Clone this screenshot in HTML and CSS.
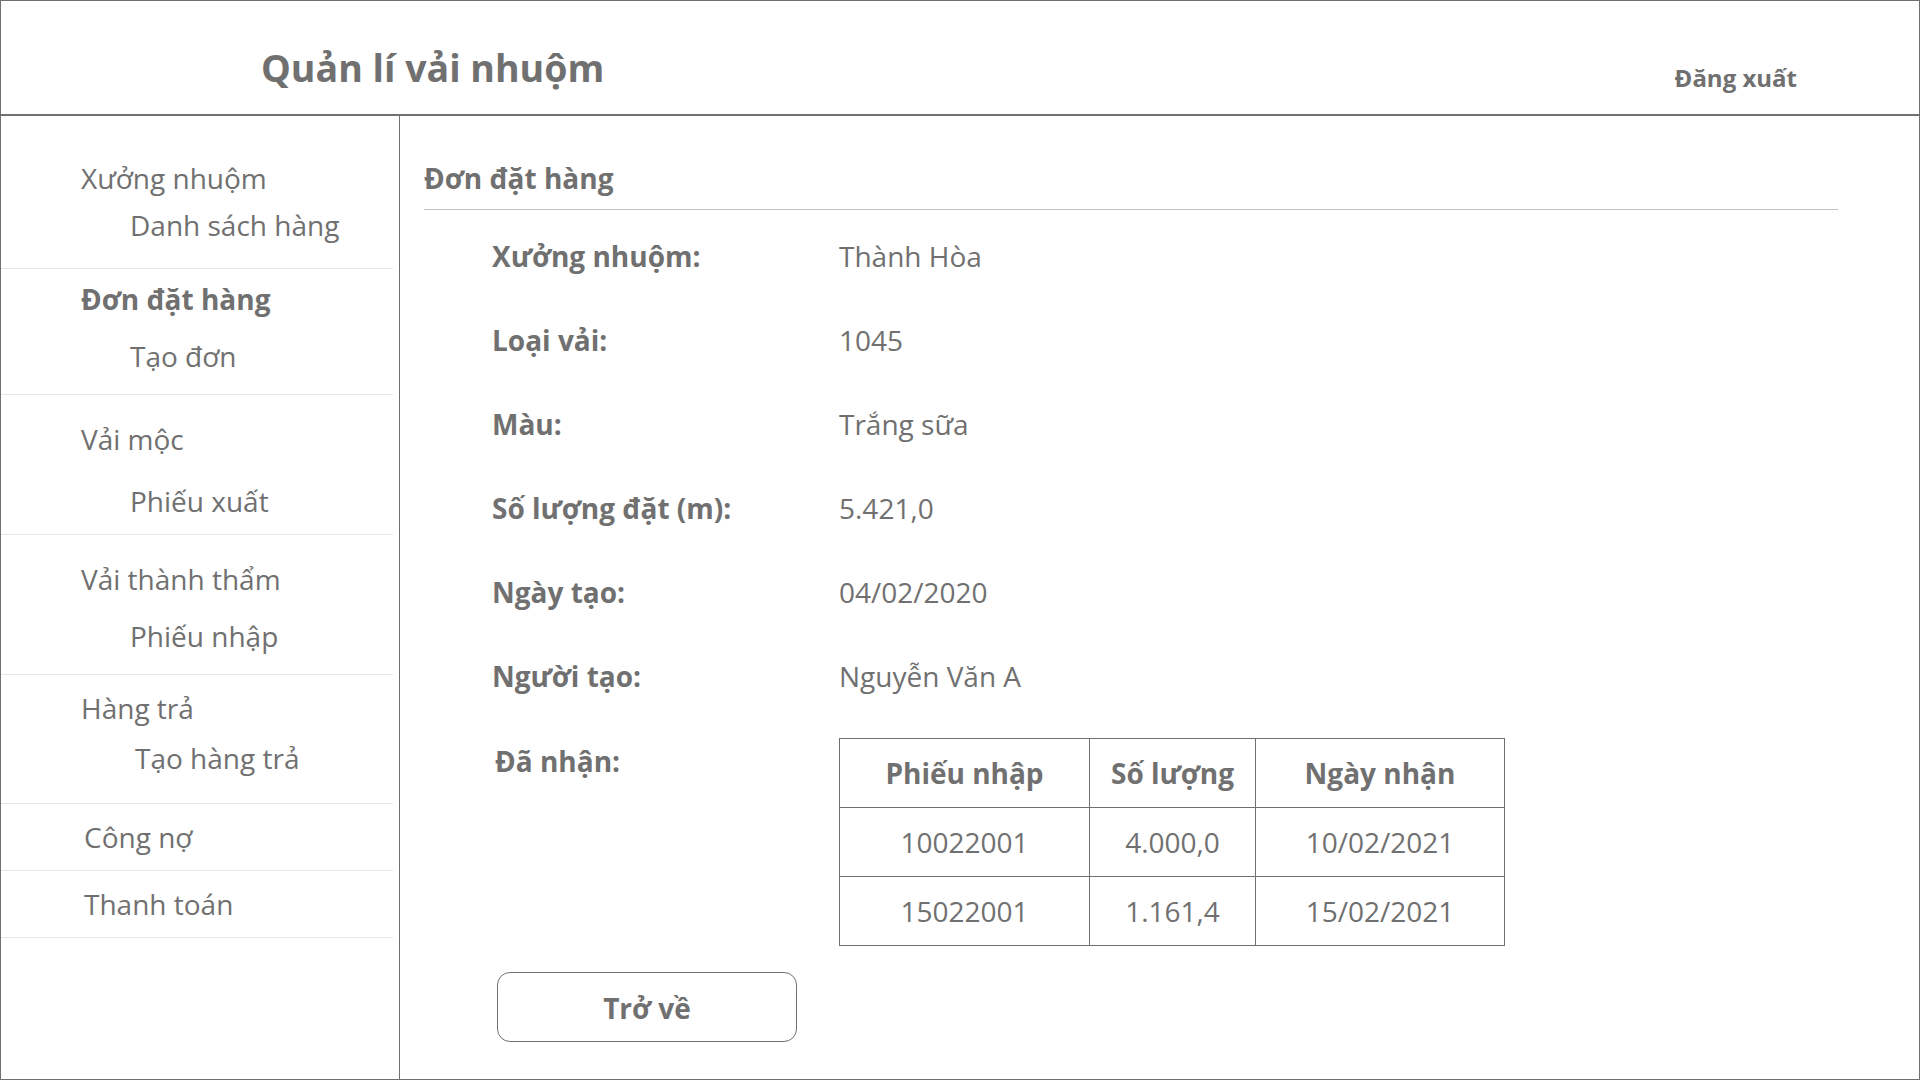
FILE: index.html
```html
<!DOCTYPE html>
<html lang="vi">
<head>
<meta charset="utf-8">
<title>Quản lí vải nhuộm</title>
<link rel="stylesheet" href="styles.css">
</head>
<body>
<div class="page">
  <header class="topbar">
    <h1 class="app-title">Quản lí vải nhuộm</h1>
    <a class="logout" href="#">Đăng xuất</a>
  </header>
  <div class="layout">
    <nav class="sidebar">
      <div class="nav-group g1">
        <div class="nav-main">Xưởng nhuộm</div>
        <div class="nav-sub">Danh sách hàng</div>
      </div>
      <div class="nav-group g2">
        <div class="nav-main active">Đơn đặt hàng</div>
        <div class="nav-sub">Tạo đơn</div>
      </div>
      <div class="nav-group g3">
        <div class="nav-main">Vải mộc</div>
        <div class="nav-sub">Phiếu xuất</div>
      </div>
      <div class="nav-group g4">
        <div class="nav-main">Vải thành thẩm</div>
        <div class="nav-sub">Phiếu nhập</div>
      </div>
      <div class="nav-group g5">
        <div class="nav-main">Hàng trả</div>
        <div class="nav-sub nav-sub-wide">Tạo hàng trả</div>
      </div>
      <div class="nav-group g6">
        <div class="nav-main nav-main-wide">Công nợ</div>
      </div>
      <div class="nav-group g6">
        <div class="nav-main nav-main-wide">Thanh toán</div>
      </div>
    </nav>
    <main class="content">
      <h2 class="section-title">Đơn đặt hàng</h2>
      <div class="details">
        <div class="label">Xưởng nhuộm:</div><div class="value">Thành Hòa</div>
        <div class="label">Loại vải:</div><div class="value">1045</div>
        <div class="label">Màu:</div><div class="value">Trắng sữa</div>
        <div class="label">Số lượng đặt (m):</div><div class="value">5.421,0</div>
        <div class="label">Ngày tạo:</div><div class="value">04/02/2020</div>
        <div class="label">Người tạo:</div><div class="value">Nguyễn Văn A</div>
      </div>
      <div class="received">
        <div class="label received-label">Đã nhận:</div>
        <table class="receipts">
          <thead>
            <tr><th class="c1">Phiếu nhập</th><th class="c2">Số lượng</th><th class="c3">Ngày nhận</th></tr>
          </thead>
          <tbody>
            <tr><td>10022001</td><td>4.000,0</td><td>10/02/2021</td></tr>
            <tr><td>15022001</td><td>1.161,4</td><td>15/02/2021</td></tr>
          </tbody>
        </table>
      </div>
      <button class="back-btn" type="button">Trở về</button>
    </main>
  </div>
</div>
</body>
</html>
```
FILE: styles.css
```css
* { box-sizing: border-box; }

html, body {
  margin: 0;
  padding: 0;
  background: #ffffff;
}

body {
  font-family: "Open Sans", "Noto Sans", sans-serif;
  color: #707070;
}

.page {
  width: 1920px;
  height: 1080px;
  border: 1px solid #707070;
  display: flex;
  flex-direction: column;
  overflow: hidden;
}

/* ---------- header ---------- */
.topbar {
  height: 115px;
  flex: none;
  border-bottom: 2px solid #707070;
  display: flex;
  align-items: flex-start;
  justify-content: space-between;
  padding: 44px 122px 0 260px;
}

.app-title {
  margin: 0;
  font-size: 37.5px;
  line-height: 46px;
  font-weight: 700;
  color: #707070;
}

.logout {
  margin-top: 17px;
  font-size: 24px;
  line-height: 32px;
  font-weight: 700;
  color: #707070;
  text-decoration: none;
}

/* ---------- layout ---------- */
.layout {
  flex: 1;
  display: flex;
  min-height: 0;
}

.sidebar {
  width: 399px;
  flex: none;
  border-right: 1px solid #707070;
}

.nav-group {
  margin-right: 6px;
  border-bottom: 1px solid #e6e6e6;
  display: flex;
  flex-direction: column;
}

.nav-main,
.nav-sub {
  font-size: 28px;
  line-height: 38px;
  white-space: nowrap;
}

.nav-main { padding-left: 80px; }
.nav-main-wide { padding-left: 83px; }
.nav-sub { padding-left: 129px; }
.nav-sub-wide { padding-left: 134px; }

.nav-main.active { font-weight: 700; }

.g1 { padding: 43px 0 24px; gap: 9px; }
.g2 { padding: 11px 0 19px; gap: 19px; }
.g3 { padding: 25px 0 14px; gap: 24px; }
.g4 { padding: 25px 0 19px; gap: 19px; }
.g5 { padding: 14px 0 26px; gap: 12px; }
.g6 { padding: 14px 0 14px; }

/* ---------- content ---------- */
.content {
  flex: 1;
  padding: 43px 81px 0 24px;
}

.section-title {
  margin: 0;
  font-size: 28px;
  line-height: 38px;
  font-weight: 700;
  padding-bottom: 12px;
  border-bottom: 1px solid #c4c4c4;
}

.details {
  display: grid;
  grid-template-columns: 347px 1fr;
  row-gap: 46px;
  margin-top: 27px;
  padding-left: 68px;
}

.label {
  font-size: 28px;
  line-height: 38px;
  font-weight: 700;
  white-space: nowrap;
}

.value {
  font-size: 28px;
  line-height: 38px;
  white-space: nowrap;
}

.received {
  display: flex;
  align-items: flex-start;
  margin-top: 43px;
  padding-left: 68px;
}

.received-label {
  width: 347px;
  flex: none;
  padding-top: 4px;
  padding-left: 3px;
}

.receipts {
  border-collapse: collapse;
  width: 665px;
  table-layout: fixed;
}

.receipts th,
.receipts td {
  border: 1px solid #707070;
  height: 69px;
  padding: 0;
  text-align: center;
  vertical-align: middle;
  font-size: 28px;
  line-height: 38px;
  color: #707070;
}

.receipts th { font-weight: 700; }
.receipts .c1 { width: 250px; }
.receipts .c2 { width: 166px; }
.receipts .c3 { width: 249px; }

.back-btn {
  display: block;
  margin: 26px 0 0 73px;
  width: 300px;
  height: 70px;
  border: 1px solid #707070;
  border-radius: 13px;
  background: #ffffff;
  font-family: "Open Sans", "Noto Sans", sans-serif;
  font-size: 28px;
  font-weight: 700;
  color: #707070;
  padding: 2px 0 0;
  cursor: pointer;
}
```
